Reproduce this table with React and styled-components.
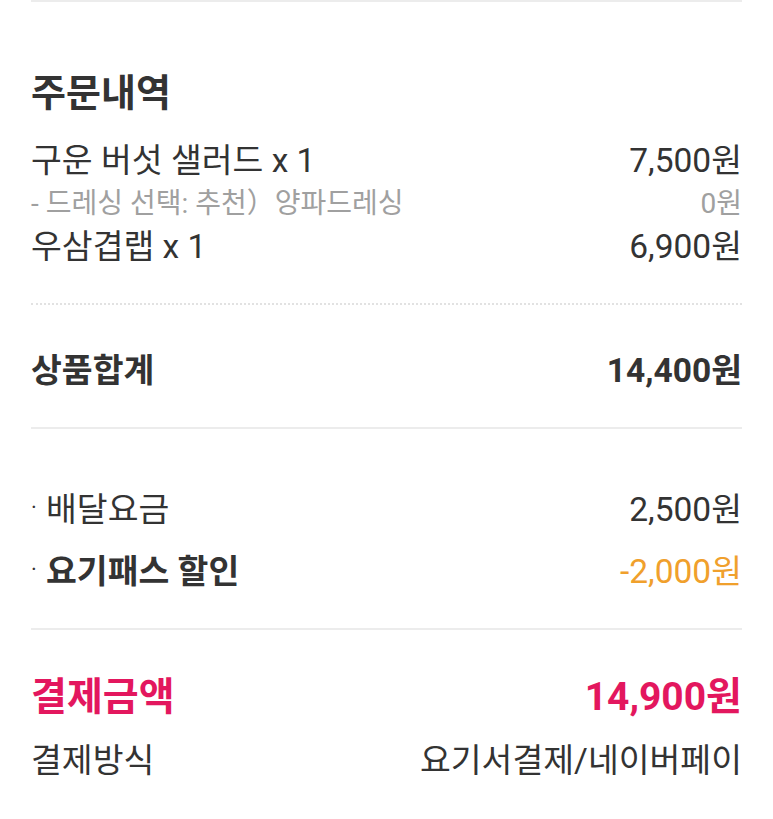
import styled, { createGlobalStyle } from "styled-components";

const GlobalStyle = createGlobalStyle`
  body {
    margin: 0;
    background: #fff;
    font-family: "Roboto", "Noto Sans CJK KR", sans-serif;
    color: #333;
  }
`;

const items = [
  { name: "구운 버섯 샐러드 x 1", price: "7,500원" },
  { name: "- 드레싱 선택: 추천）양파드레싱", price: "0원", option: true },
  { name: "우삼겹랩 x 1", price: "6,900원" },
];

export default function App() {
  return (
    <>
      <GlobalStyle />
      <Receipt>
        <Line />
        <Title>주문내역</Title>
        <ItemList>
          {items.map((it) => (
            <ItemRow key={it.name} $option={it.option}>
              <span>{it.name}</span>
              <span>{it.price}</span>
            </ItemRow>
          ))}
        </ItemList>
        <Line $dotted />
        <TotalRow>
          <span>상품합계</span>
          <span>14,400원</span>
        </TotalRow>
        <Line />
        <FeeList>
          <FeeRow>
            <Label>
              <Dot>·</Dot>배달요금
            </Label>
            <span>2,500원</span>
          </FeeRow>
          <FeeRow $discount>
            <Label $bold>
              <Dot>·</Dot>요기패스 할인
            </Label>
            <span>-2,000원</span>
          </FeeRow>
        </FeeList>
        <Line />
        <PayRow>
          <span>결제금액</span>
          <span>14,900원</span>
        </PayRow>
        <MethodRow>
          <span>결제방식</span>
          <span>요기서결제/네이버페이</span>
        </MethodRow>
      </Receipt>
    </>
  );
}

const Receipt = styled.div`
  padding: 0 31px 29px;
  display: flex;
  flex-direction: column;
`;

const Line = styled.div`
  height: 0;
  border-top: 2px ${(p) => (p.$dotted ? "dotted #e2e2e2" : "solid #ececec")};
`;

const Title = styled.h2`
  margin: 69px 0 0;
  font-size: 38px;
  line-height: 44px;
  font-weight: 700;
  color: #333;
`;

const ItemList = styled.div`
  margin: 21px 0 38px;
  display: flex;
  flex-direction: column;
`;

const ItemRow = styled.div`
  display: flex;
  justify-content: space-between;
  align-items: center;
  height: 43px;
  font-size: ${(p) => (p.$option ? "28px" : "33.5px")};
  color: ${(p) => (p.$option ? "#a0a0a0" : "#333")};
`;

const TotalRow = styled.div`
  display: flex;
  justify-content: space-between;
  align-items: center;
  height: 44px;
  margin: 40px 0 38px;
  font-size: 33.5px;
  font-weight: 700;
`;

const FeeList = styled.div`
  display: flex;
  flex-direction: column;
  margin: 46px 0 29px;
`;

const FeeRow = styled.div`
  display: flex;
  justify-content: space-between;
  align-items: center;
  height: 62px;
  font-size: 33.5px;
  color: #333;

  & > span:last-child {
    color: ${(p) => (p.$discount ? "#f0a02c" : "#333")};
  }
`;

const Label = styled.span`
  display: flex;
  align-items: center;
  font-weight: ${(p) => (p.$bold ? 700 : 400)};
`;

const Dot = styled.span`
  width: 15px;
  font-size: 22px;
  font-weight: 400;
  padding-top: 3px;
`;

const PayRow = styled.div`
  display: flex;
  justify-content: space-between;
  align-items: center;
  height: 62px;
  margin-top: 32px;
  font-size: 39px;
  font-weight: 700;
  color: #e3175e;
`;

const MethodRow = styled.div`
  display: flex;
  justify-content: space-between;
  align-items: center;
  height: 66px;
  font-size: 33.5px;
  color: #333;
`;
